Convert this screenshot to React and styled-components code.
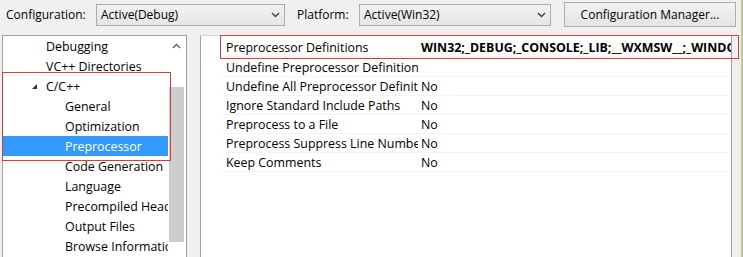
import React from 'react';
import styled, { createGlobalStyle } from 'styled-components';

const Global = createGlobalStyle`
  html, body {
    margin: 0;
    padding: 0;
    background: #f0f0f0;
    overflow: hidden;
  }
  body {
    font-family: "Open Sans", "Noto Sans", sans-serif;
    font-size: 12.4px;
    color: #000;
  }
`;

const Page = styled.div`
  width: 743px;
  height: 257px;
  overflow: hidden;
  display: flex;
  flex-direction: column;
  border-right: 2px solid #b5cc8e;
  box-sizing: border-box;
`;

const TopBar = styled.div`
  display: flex;
  align-items: center;
  height: 27px;
  padding: 1px 0 0 6px;
  font-size: 12px;
`;

const Label = styled.span`
  width: ${p => p.$w}px;
  flex-shrink: 0;
`;

const Combo = styled.div`
  width: ${p => p.$w}px;
  height: 22px;
  box-sizing: border-box;
  border: 1px solid #acacac;
  background: linear-gradient(#f2f2f2, #e6e6e6);
  display: flex;
  align-items: center;
  justify-content: space-between;
  padding: 0 4px 0 4px;
  margin-right: ${p => p.$mr}px;
  flex-shrink: 0;
`;

const Button = styled.div`
  width: 172px;
  height: 25px;
  box-sizing: border-box;
  border: 1px solid #adadad;
  background: linear-gradient(#f2f2f2, #e4e4e4);
  display: flex;
  align-items: center;
  justify-content: center;
  margin-top: -1px;
`;

const Body = styled.div`
  display: flex;
  margin-top: 7px;
  padding-left: 2px;
  flex: 1;
  gap: 13px;
`;

const TreePanel = styled.div`
  width: 185px;
  box-sizing: border-box;
  border: 1px solid #a0a0a0;
  border-bottom: none;
  background: #fff;
  display: flex;
`;

const TreeList = styled.div`
  width: 165px;
  display: flex;
  flex-direction: column;
`;

const TreeRow = styled.div`
  height: 20px;
  display: flex;
  align-items: center;
  padding-left: ${p => p.$indent}px;
  white-space: nowrap;
  overflow: hidden;
  background: ${p => (p.$selected ? '#3399ff' : 'transparent')};
  color: ${p => (p.$selected ? '#fff' : '#000')};
`;

const Expander = styled.span`
  width: 15px;
  margin-left: -15px;
  display: flex;
  align-items: center;
`;

const Marked = styled.div`
  position: relative;
  &::after {
    content: '';
    position: absolute;
    left: -1px;
    right: -3px;
    top: -4px;
    bottom: -5px;
    border: 1px solid #d8393f;
    pointer-events: none;
  }
`;

const ScrollBar = styled.div`
  width: 16px;
  display: flex;
  flex-direction: column;
  align-items: center;
  background: #fff;
`;

const Arrow = styled.div`
  height: 20px;
  display: flex;
  align-items: center;
`;

const Thumb = styled.div`
  width: 15px;
  height: 155px;
  margin-top: 31px;
  background: #cdcdcd;
`;

const GridPanel = styled.div`
  width: 532px;
  box-sizing: border-box;
  border-left: 1px solid #a0a0a0;
  border-top: 1px solid #d6d6d6;
  border-right: 1px solid #a0a0a0;
  background: #fff;
  padding: 1px 0 0 22px;
`;

const GridRow = styled.div`
  position: relative;
  height: 19px;
  display: flex;
  align-items: center;
  border-bottom: 1px solid #f4f4f4;
  box-sizing: border-box;
  margin: ${p => (p.$marked ? '1px 0' : '0')};
  &::after {
    content: '';
    display: ${p => (p.$marked ? 'block' : 'none')};
    position: absolute;
    left: -3px;
    right: -8px;
    top: -3px;
    bottom: -3px;
    border: 1px solid #d8393f;
    pointer-events: none;
  }
`;

const NameCell = styled.div`
  width: 195px;
  flex-shrink: 0;
  padding-left: 3px;
  box-sizing: border-box;
  white-space: nowrap;
  overflow: hidden;
`;

const ValueCell = styled.div`
  flex: 1;
  padding-left: 3px;
  white-space: nowrap;
  overflow: hidden;
  font-weight: ${p => (p.$bold ? 700 : 400)};
`;

const Chevron = ({ up }) => (
  <svg width="9" height="6" viewBox="0 0 9 6">
    <path
      d={up ? 'M1 5 L4.5 1.5 L8 5' : 'M1 1 L4.5 4.5 L8 1'}
      fill="none"
      stroke={up ? '#606060' : '#404040'}
      strokeWidth="1.4"
    />
  </svg>
);

const Triangle = () => (
  <svg width="7" height="7" viewBox="0 0 7 7">
    <path d="M6 1 L6 6 L1 6 Z" fill="#333" />
  </svg>
);

const gridRows = [
  ['Preprocessor Definitions', 'WIN32;_DEBUG;_CONSOLE;_LIB;__WXMSW__;_WINDOWS', true],
  ['Undefine Preprocessor Definitions', ''],
  ['Undefine All Preprocessor Definitions', 'No'],
  ['Ignore Standard Include Paths', 'No'],
  ['Preprocess to a File', 'No'],
  ['Preprocess Suppress Line Numbers', 'No'],
  ['Keep Comments', 'No'],
];

export default function App() {
  return (
    <>
      <Global />
      <Page>
        <TopBar>
          <Label $w={90}>Configuration:</Label>
          <Combo $w={189} $mr={12}>
            <span>Active(Debug)</span>
            <Chevron />
          </Combo>
          <Label $w={62}>Platform:</Label>
          <Combo $w={192} $mr={13}>
            <span>Active(Win32)</span>
            <Chevron />
          </Combo>
          <Button>Configuration Manager...</Button>
        </TopBar>
        <Body>
          <TreePanel>
            <TreeList>
              <TreeRow $indent={43}>Debugging</TreeRow>
              <TreeRow $indent={43}>VC++ Directories</TreeRow>
              <Marked>
                <TreeRow $indent={43}>
                  <Expander><Triangle /></Expander>
                  C/C++
                </TreeRow>
                <TreeRow $indent={62}>General</TreeRow>
                <TreeRow $indent={62}>Optimization</TreeRow>
                <TreeRow $indent={62} $selected>Preprocessor</TreeRow>
              </Marked>
              <TreeRow $indent={62}>Code Generation</TreeRow>
              <TreeRow $indent={62}>Language</TreeRow>
              <TreeRow $indent={62}>Precompiled Headers</TreeRow>
              <TreeRow $indent={62}>Output Files</TreeRow>
              <TreeRow $indent={62}>Browse Information</TreeRow>
            </TreeList>
            <ScrollBar>
              <Arrow><Chevron up /></Arrow>
              <Thumb />
            </ScrollBar>
          </TreePanel>
          <GridPanel>
            {gridRows.map(([name, value, marked]) => (
              <GridRow key={name} $marked={marked}>
                <NameCell>{name}</NameCell>
                <ValueCell $bold={marked}>{value}</ValueCell>
              </GridRow>
            ))}
          </GridPanel>
        </Body>
      </Page>
    </>
  );
}
